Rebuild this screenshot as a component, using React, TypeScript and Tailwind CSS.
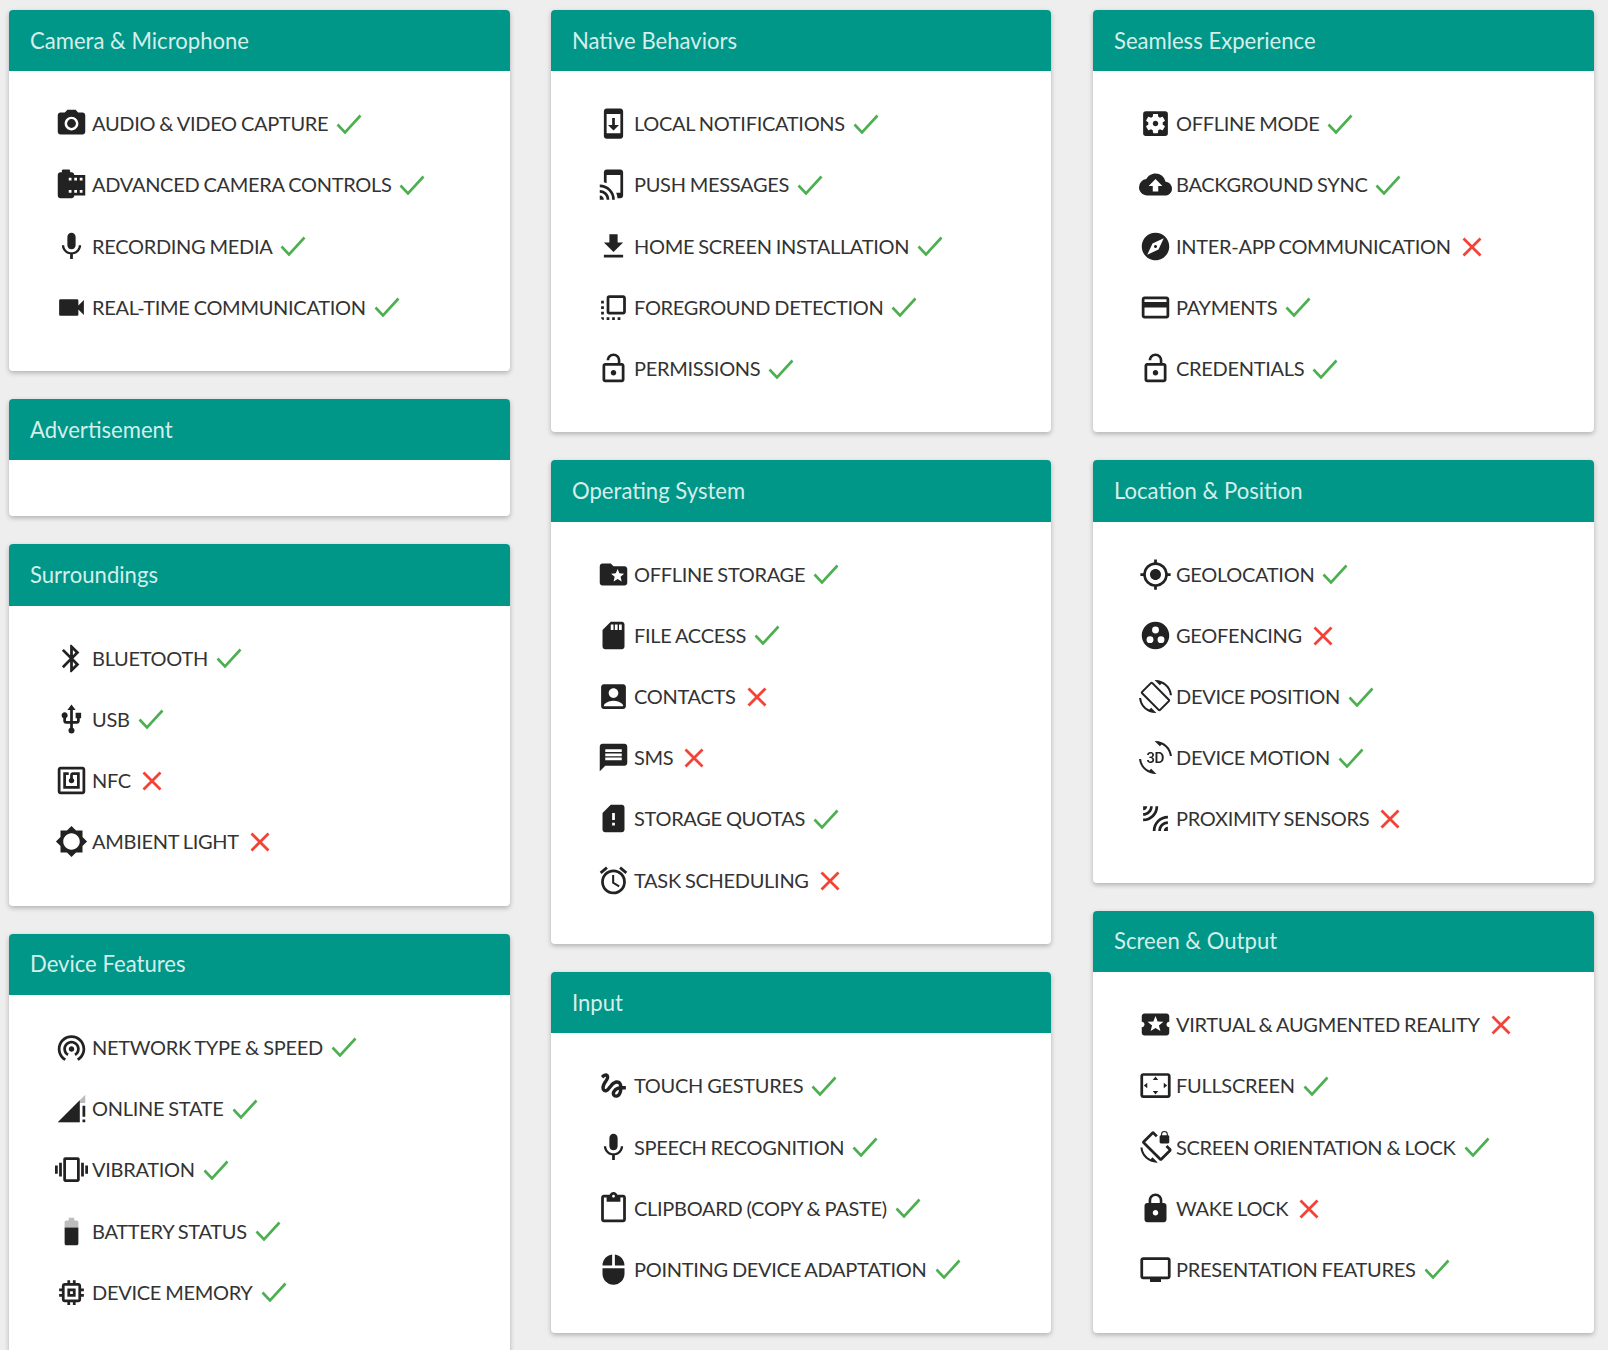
import type { IconType } from "react-icons";
import {
  Md3dRotation, MdAccessAlarm, MdAccountBox, MdBattery80, MdBluetooth, MdBrightness5, MdCameraRoll,
  MdCloudUpload, MdContentPaste, MdCreditCard, MdExplore, MdFlipToFront, MdFolderSpecial, MdGesture,
  MdGetApp, MdGpsFixed, MdGroupWork, MdLeakAdd, MdLocalPlay, MdLock, MdLockOpen, MdMemory, MdMessage,
  MdMic, MdMouse, MdNfc, MdPhotoCamera, MdScreenLockRotation, MdScreenRotation, MdSdStorage,
  MdSettingsApplications, MdSettingsOverscan, MdSignalCellularConnectedNoInternet3Bar, MdSimCardAlert,
  MdSystemUpdate, MdTapAndPlay, MdTv, MdUsb, MdVibration, MdVideocam, MdWifiTethering,
} from "react-icons/md";

type Feature = { icon: IconType; label: string; ok: boolean };

function Check() {
  return (
    <svg viewBox="0 0 26 20" className="w-[26px] h-[20px] ml-[8px] shrink-0" fill="none" stroke="#4caf50" strokeWidth="2.6">
      <path d="M1.5 10.5 L9 18.5 L24.5 1.5" />
    </svg>
  );
}

function Cross() {
  return (
    <svg viewBox="0 0 20 20" className="w-[20px] h-[20px] ml-[11px] mt-[1px] shrink-0" fill="none" stroke="#f44336" strokeWidth="2.8">
      <path d="M1.5 1.5 L18.5 18.5 M18.5 1.5 L1.5 18.5" />
    </svg>
  );
}

function Card({ title, items }: { title: string; items?: Feature[] }) {
  return (
    <section className="bg-white rounded-[4px] shadow-[0_2px_5px_rgba(0,0,0,0.26)] overflow-hidden shrink-0">
      <h2 className="h-[61.2px] bg-[#009688] px-[21px] pb-[1px] flex items-center text-[22.1px] text-[#d5eeea] font-normal">
        {title}
      </h2>
      {items ? (
        <ul className="pt-[22px] pb-[33.3px] pl-[46px]">
          {items.map((item) => (
            <li key={item.label} className="h-[61.2px] flex items-center text-[20px] tracking-[-0.3px] [word-spacing:-0.7px] text-[#333]">
              <span className="w-[33px] h-[33px] mr-[4px] shrink-0 flex items-center justify-center">
                <item.icon size={33} color="#222" />
              </span>
              <span className="pb-[1px]">{item.label}</span>
              {item.ok ? <Check /> : <Cross />}
            </li>
          ))}
        </ul>
      ) : (
        <div className="h-[56px]" />
      )}
    </section>
  );
}

export default function App() {
  return (
    <div className="h-[1350px] overflow-hidden bg-[#eeeeee] flex gap-[41px] pl-[9px] pt-[10px] font-['Lato',sans-serif]">
      <div className="w-[501px] flex flex-col gap-[28px]">
        <Card
          title="Camera & Microphone"
          items={[
            { icon: MdPhotoCamera, label: "AUDIO & VIDEO CAPTURE", ok: true },
            { icon: MdCameraRoll, label: "ADVANCED CAMERA CONTROLS", ok: true },
            { icon: MdMic, label: "RECORDING MEDIA", ok: true },
            { icon: MdVideocam, label: "REAL-TIME COMMUNICATION", ok: true },
          ]}
        />
        <Card title="Advertisement" />
        <Card
          title="Surroundings"
          items={[
            { icon: MdBluetooth, label: "BLUETOOTH", ok: true },
            { icon: MdUsb, label: "USB", ok: true },
            { icon: MdNfc, label: "NFC", ok: false },
            { icon: MdBrightness5, label: "AMBIENT LIGHT", ok: false },
          ]}
        />
        <Card
          title="Device Features"
          items={[
            { icon: MdWifiTethering, label: "NETWORK TYPE & SPEED", ok: true },
            { icon: MdSignalCellularConnectedNoInternet3Bar, label: "ONLINE STATE", ok: true },
            { icon: MdVibration, label: "VIBRATION", ok: true },
            { icon: MdBattery80, label: "BATTERY STATUS", ok: true },
            { icon: MdMemory, label: "DEVICE MEMORY", ok: true },
          ]}
        />
      </div>
      <div className="w-[500px] mr-[1px] flex flex-col gap-[28px]">
        <Card
          title="Native Behaviors"
          items={[
            { icon: MdSystemUpdate, label: "LOCAL NOTIFICATIONS", ok: true },
            { icon: MdTapAndPlay, label: "PUSH MESSAGES", ok: true },
            { icon: MdGetApp, label: "HOME SCREEN INSTALLATION", ok: true },
            { icon: MdFlipToFront, label: "FOREGROUND DETECTION", ok: true },
            { icon: MdLockOpen, label: "PERMISSIONS", ok: true },
          ]}
        />
        <Card
          title="Operating System"
          items={[
            { icon: MdFolderSpecial, label: "OFFLINE STORAGE", ok: true },
            { icon: MdSdStorage, label: "FILE ACCESS", ok: true },
            { icon: MdAccountBox, label: "CONTACTS", ok: false },
            { icon: MdMessage, label: "SMS", ok: false },
            { icon: MdSimCardAlert, label: "STORAGE QUOTAS", ok: true },
            { icon: MdAccessAlarm, label: "TASK SCHEDULING", ok: false },
          ]}
        />
        <Card
          title="Input"
          items={[
            { icon: MdGesture, label: "TOUCH GESTURES", ok: true },
            { icon: MdMic, label: "SPEECH RECOGNITION", ok: true },
            { icon: MdContentPaste, label: "CLIPBOARD (COPY & PASTE)", ok: true },
            { icon: MdMouse, label: "POINTING DEVICE ADAPTATION", ok: true },
          ]}
        />
      </div>
      <div className="w-[501px] flex flex-col gap-[28px]">
        <Card
          title="Seamless Experience"
          items={[
            { icon: MdSettingsApplications, label: "OFFLINE MODE", ok: true },
            { icon: MdCloudUpload, label: "BACKGROUND SYNC", ok: true },
            { icon: MdExplore, label: "INTER-APP COMMUNICATION", ok: false },
            { icon: MdCreditCard, label: "PAYMENTS", ok: true },
            { icon: MdLockOpen, label: "CREDENTIALS", ok: true },
          ]}
        />
        <Card
          title="Location & Position"
          items={[
            { icon: MdGpsFixed, label: "GEOLOCATION", ok: true },
            { icon: MdGroupWork, label: "GEOFENCING", ok: false },
            { icon: MdScreenRotation, label: "DEVICE POSITION", ok: true },
            { icon: Md3dRotation, label: "DEVICE MOTION", ok: true },
            { icon: MdLeakAdd, label: "PROXIMITY SENSORS", ok: false },
          ]}
        />
        <Card
          title="Screen & Output"
          items={[
            { icon: MdLocalPlay, label: "VIRTUAL & AUGMENTED REALITY", ok: false },
            { icon: MdSettingsOverscan, label: "FULLSCREEN", ok: true },
            { icon: MdScreenLockRotation, label: "SCREEN ORIENTATION & LOCK", ok: true },
            { icon: MdLock, label: "WAKE LOCK", ok: false },
            { icon: MdTv, label: "PRESENTATION FEATURES", ok: true },
          ]}
        />
      </div>
    </div>
  );
}
